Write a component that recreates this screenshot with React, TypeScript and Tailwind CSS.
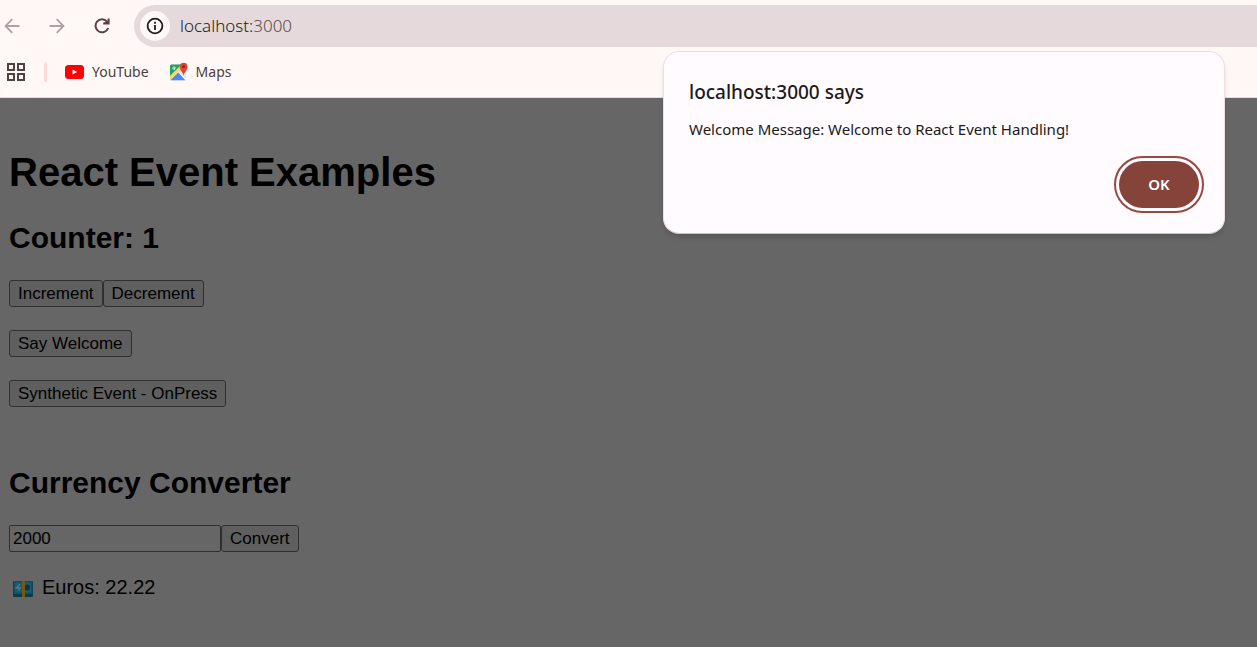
import { useState } from "react";
import type { ReactNode } from "react";

function BackIcon() {
  return (
    <svg viewBox="0 0 16 16" className="h-4 w-4" fill="none" stroke="currentColor" strokeWidth="1.8" aria-hidden="true">
      <path d="M15.500 8H1.800M8.300 1.200L1.500 8l6.800 6.800" />
    </svg>
  );
}

function ForwardIcon() {
  return (
    <svg viewBox="0 0 16 16" className="h-4 w-4" fill="none" stroke="currentColor" strokeWidth="1.8" aria-hidden="true">
      <path d="M.5 8h13.700M7.700 1.200L14.500 8l-6.800 6.800" />
    </svg>
  );
}

function ReloadIcon() {
  return (
    <svg viewBox="0 0 16 16" className="h-4 w-4" fill="none" stroke="currentColor" strokeWidth="2" aria-hidden="true">
      <path d="M14.200 10A6.500 6.500 0 1 1 13 3.600" />
      <path d="M14.600 .5V5.600H9.200M10.500 5.300L14.600 3" />
    </svg>
  );
}

function InfoIcon() {
  return (
    <svg viewBox="0 0 18 18" className="h-[18px] w-[18px]" fill="none" stroke="currentColor" strokeWidth="1.8" aria-hidden="true">
      <circle cx="9" cy="9" r="7.400" />
      <path d="M9 8v5M9 4.800v1.900" />
    </svg>
  );
}

function GridIcon() {
  return (
    <svg viewBox="0 0 18 18" className="h-[18px] w-[18px]" fill="none" stroke="currentColor" strokeWidth="2" aria-hidden="true">
      <path d="M1 1h6v6H1zM11 1h6v6h-6zM1 11h6v6H1zM11 11h6v6h-6z" />
    </svg>
  );
}

function YouTubeIcon() {
  return (
    <svg viewBox="0 0 19 14" className="h-[14px] w-[19px]" aria-hidden="true">
      <rect width="19" height="14" rx="3.500" fill="#ff0000" />
      <path d="M7.500 4.500v5L12.200 7z" fill="#fff" />
    </svg>
  );
}

function MapsIcon() {
  return (
    <svg viewBox="0 0 20 20" className="h-5 w-5" aria-hidden="true">
      <clipPath id="map-sheet">
        <rect x="1" y="2.500" width="16" height="16" rx="1.500" />
      </clipPath>
      <g clipPath="url(#map-sheet)">
        <rect x="1" y="2" width="17" height="17" fill="#e4e6e8" />
        <path d="M1 2h15L1 17z" fill="#1fa463" />
        <path d="M1 18.500L10 9.500l8 9z" fill="#4a8af4" />
        <path d="M1 13.800L12 3l2.500 2.500L1 18.500z" fill="#fdd663" />
        <path d="M9.500 9.600l8 8.900" stroke="#fff" strokeWidth="1.300" />
      </g>
      <path d="M6.900 5.900H5.100v.9h.9a1.200 1.200 0 1 1-.2-1.500" fill="none" stroke="#fff" strokeWidth=".8" />
      <path d="M14.500 14C14.300 10.200 10.800 8.700 10.800 4.700a3.900 3.900 0 0 1 7.800 0c0 4-3.700 5.500-4.100 9.300z" fill="#e0443a" />
      <circle cx="14.700" cy="4.700" r="1.400" fill="#80201c" />
    </svg>
  );
}

function BanknoteIcon() {
  return (
    <svg viewBox="0 0 20 16" className="mt-[3px] h-4 w-5" role="img" aria-label="Banknotes">
      <rect width="20" height="16" rx="1" fill="#0c3a4d" />
      <rect x=".5" width="19" height="13" rx="1" fill="#124f67" />
      <rect x="2" y="1.500" width="16" height="10" fill="#1a5b70" />
      <circle cx="14" cy="6.500" r="3" fill="#0b3447" />
      <path d="M7 3.300L3.300 6.800H8M6 6.800v3" stroke="#5c7c88" strokeWidth="1.200" fill="none" />
      <rect x="9" width="3" height="16" fill="#75590d" />
    </svg>
  );
}

function PageButton({ children, onClick }: { children: ReactNode; onClick?: () => void }) {
  return (
    <button
      type="button"
      onClick={onClick}
      className="h-[27px] rounded-[3px] border border-[#303030] bg-[#5f5f5f] px-2 text-[17px] leading-none"
    >
      {children}
    </button>
  );
}

function BrowserChrome() {
  return (
    <header className="border-b border-[#e8dbd9] bg-[#fff8f6] pt-[5px] font-['Noto_Sans',sans-serif]">
      <div className="flex h-[42px] items-center">
        <div className="flex shrink-0 items-center gap-[29px] pr-6 pl-1 text-[#aca3a2]">
          <button type="button" aria-label="Back"><BackIcon /></button>
          <button type="button" aria-label="Forward"><ForwardIcon /></button>
          <button type="button" aria-label="Reload" className="text-[#5b403c]"><ReloadIcon /></button>
        </div>
        <div className="flex h-full flex-1 items-center gap-[10px] rounded-l-full bg-[#e5d9db] pl-[6px]">
          <button
            type="button"
            aria-label="Site information"
            className="flex h-[30px] w-[30px] items-center justify-center rounded-full bg-[#fff8f6] text-[#241c1c]"
          >
            <InfoIcon />
          </button>
          <p className="text-[17px] font-light text-[#241c1c]">
            localhost:<span className="text-[#5b4c4b]">3000</span>
          </p>
        </div>
      </div>
      <nav aria-label="Bookmarks" className="flex h-[50px] items-center pl-[7px] text-sm text-[#4a4140]">
        <button type="button" aria-label="Apps" className="text-[#54413f]"><GridIcon /></button>
        <span className="ml-[19px] h-5 w-[3px] rounded-full bg-[#ffdad5]" />
        <a href="#youtube" className="ml-[18px] flex items-center gap-2"><YouTubeIcon />YouTube</a>
        <a href="#maps" className="ml-5 flex items-center gap-[7px]"><MapsIcon />Maps</a>
      </nav>
    </header>
  );
}

function AlertDialog({ onClose }: { onClose: () => void }) {
  return (
    <div
      role="alertdialog"
      aria-modal="true"
      aria-labelledby="alert-title"
      aria-describedby="alert-message"
      className="absolute top-[51px] right-8 w-[562px] max-w-[90%] rounded-2xl border border-[#f3dedb] border-b-[#cfc2c2] bg-[#fffbff] p-[25px] font-['Noto_Sans',sans-serif] text-[#201a19] shadow-md"
    >
      <h2 id="alert-title" className="text-[19px] leading-[30px] font-medium">localhost:3000 says</h2>
      <p id="alert-message" className="mt-[10px] text-[15px] leading-6">
        Welcome Message: Welcome to React Event Handling!
      </p>
      <div className="mt-5 flex justify-end">
        <button
          type="button"
          onClick={onClose}
          className="h-[47px] w-20 rounded-full bg-[#86433a] text-[15px] font-semibold text-white outline-2 outline-offset-3 outline-[#98483f]"
        >
          OK
        </button>
      </div>
    </div>
  );
}

export default function App() {
  const [count, setCount] = useState(1);
  const [amount, setAmount] = useState("2000");
  const [euros, setEuros] = useState("22.22");
  const [alertOpen, setAlertOpen] = useState(true);

  return (
    <div className="relative flex min-h-screen flex-col">
      <BrowserChrome />
      <main className="flex-1 bg-[#666666] px-[9px] pt-[51px] font-['Liberation_Sans',Arial,sans-serif] text-xl text-black">
        <h1 className="text-[40px] leading-[46px] font-bold">React Event Examples</h1>
        <h2 className="mt-[26px] text-[30px] leading-[34px] font-bold">Counter: {count}</h2>
        <div className="mt-[25px] flex flex-col items-start gap-[23px]">
          <div className="flex">
            <PageButton onClick={() => setCount(count + 1)}>Increment</PageButton>
            <PageButton onClick={() => setCount(count - 1)}>Decrement</PageButton>
          </div>
          <PageButton onClick={() => setAlertOpen(true)}>Say Welcome</PageButton>
          <PageButton>Synthetic Event - OnPress</PageButton>
        </div>
        <h2 className="mt-[59px] text-[30px] leading-[34px] font-bold">Currency Converter</h2>
        <div className="mt-[25px] flex">
          <input
            aria-label="Amount"
            type="text"
            value={amount}
            onChange={(event) => setAmount(event.target.value)}
            className="h-[27px] w-[212px] rounded-[2px] border border-[#303030] bg-[#666666] px-[3px] text-[17px] leading-none"
          />
          <PageButton onClick={() => setEuros((Number(amount) / 90).toFixed(2))}>Convert</PageButton>
        </div>
        <p className="mt-6 flex items-center gap-[9px] pl-1 leading-[23px]">
          <BanknoteIcon />
          Euros: {euros}
        </p>
      </main>
      {alertOpen && <AlertDialog onClose={() => setAlertOpen(false)} />}
    </div>
  );
}
